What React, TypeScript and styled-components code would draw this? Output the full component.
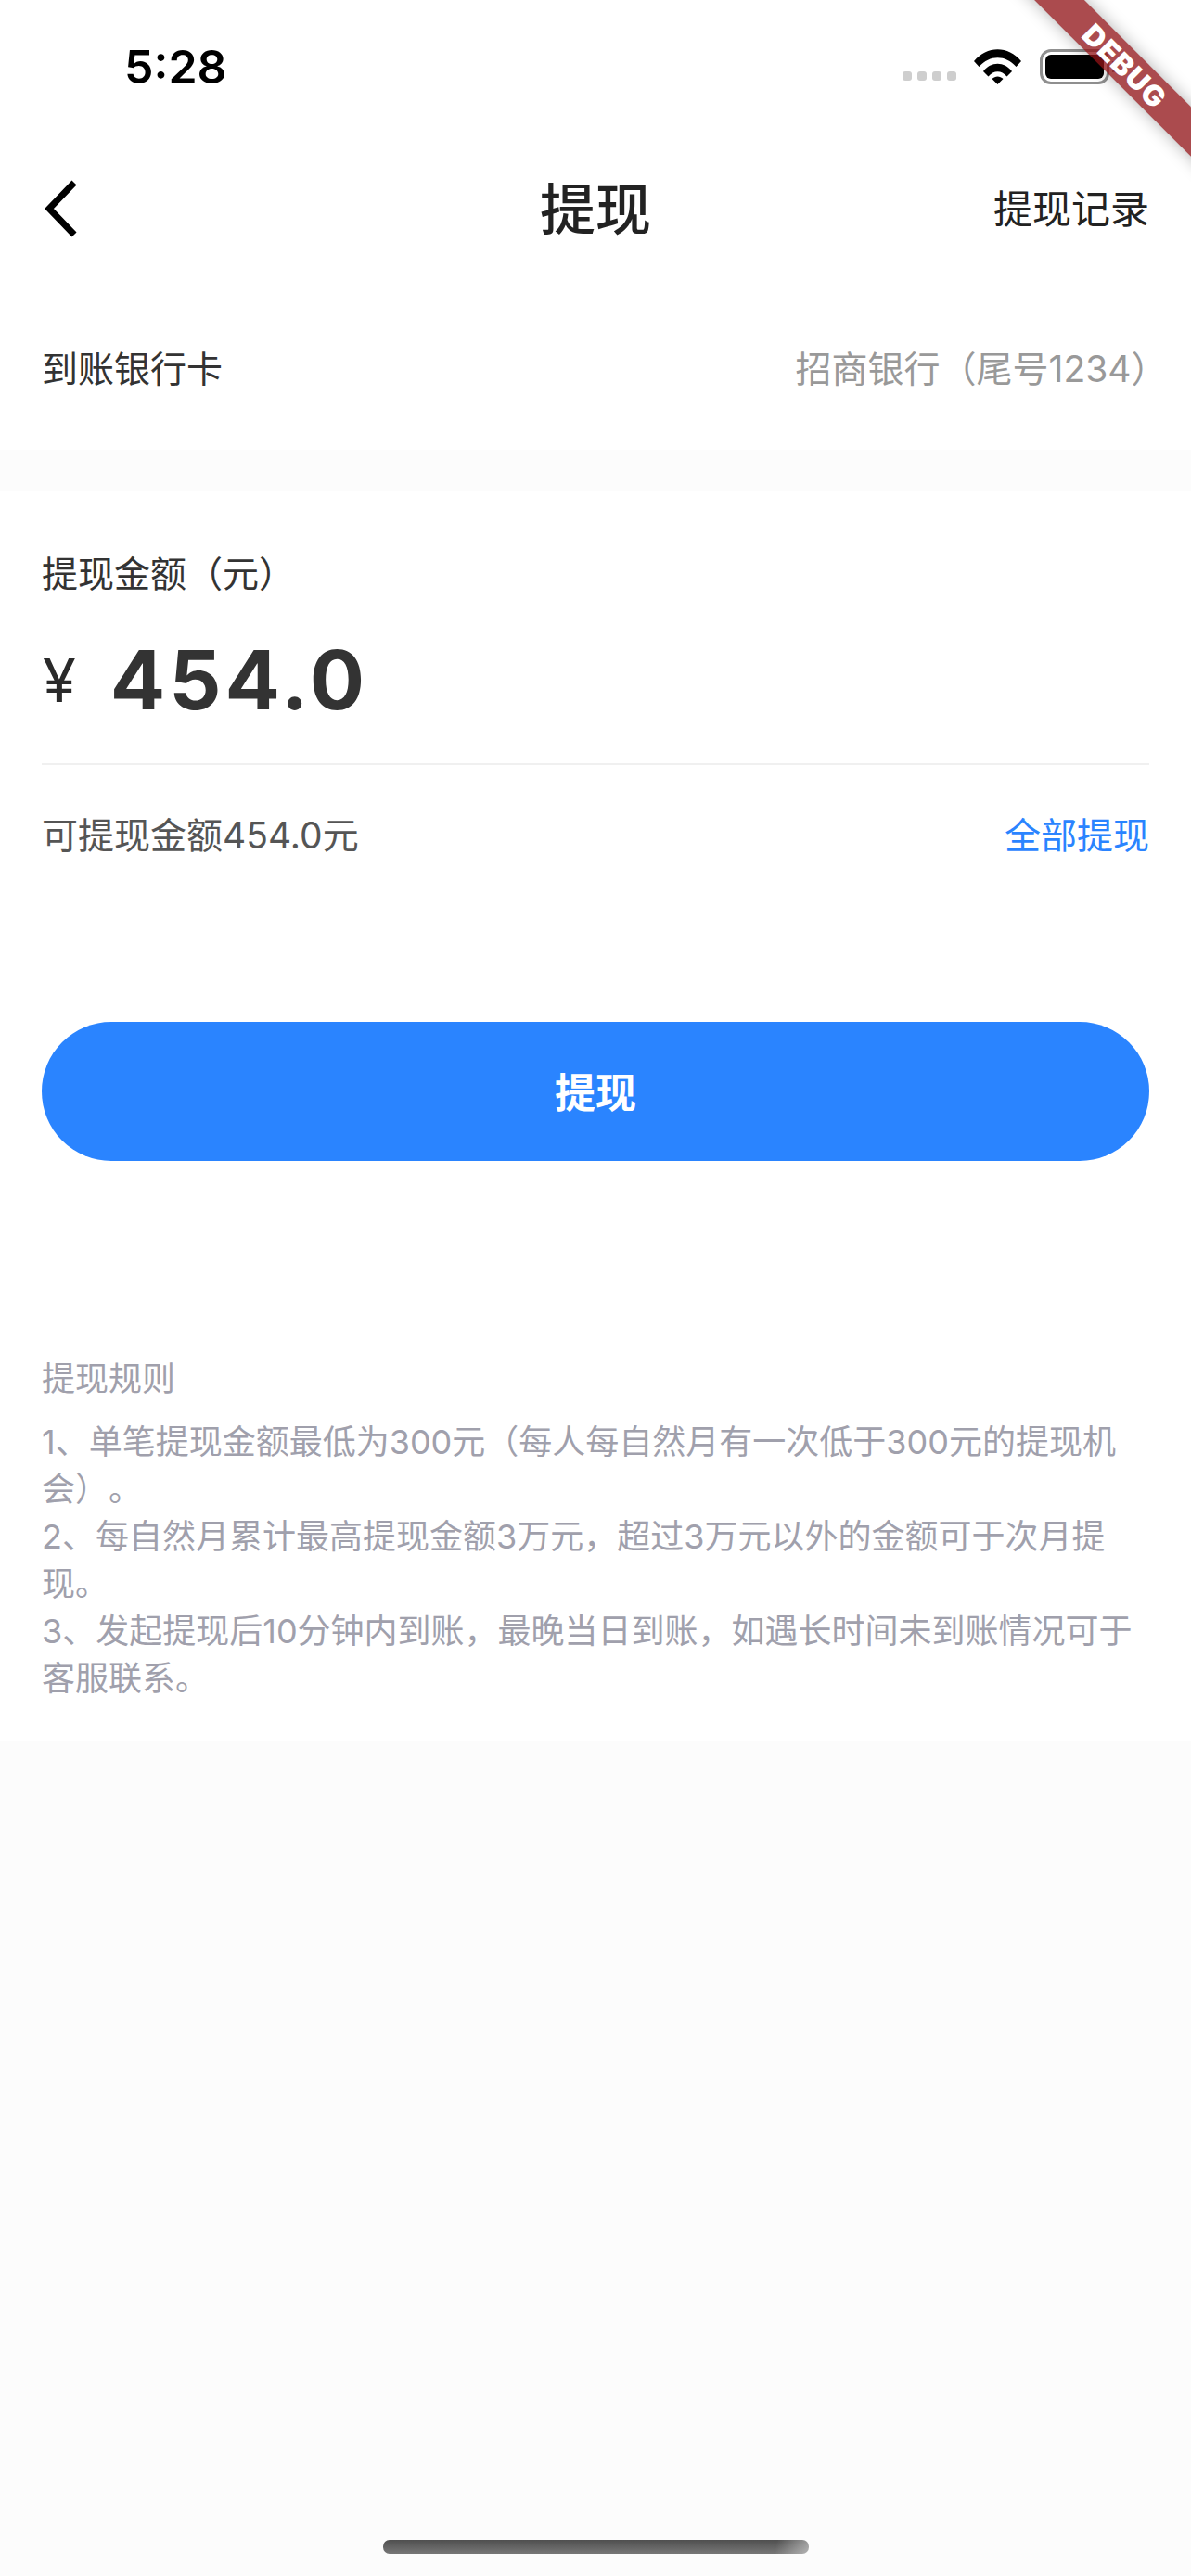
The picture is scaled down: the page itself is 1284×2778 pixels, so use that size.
import React from "react";
import styled, { createGlobalStyle } from "styled-components";

const FONT = `Inter, "Noto Sans CJK SC", sans-serif`;

const Global = createGlobalStyle`
	html, body {
		margin: 0;
		padding: 0;
		background: #fcfcfc;
	}
	* {
		box-sizing: border-box;
	}
`;

const Page = styled.div`
	position: relative;
	width: 1284px;
	height: 2778px;
	display: flex;
	flex-direction: column;
	overflow: hidden;
	background: #fcfcfc;
	font-family: ${FONT};
	text-spacing-trim: space-all;
`;

const Panel = styled.section`
	background: #fff;
	padding: 0 45px;
`;

const StatusBar = styled.div`
	height: 144px;
	display: flex;
	align-items: center;
	justify-content: space-between;
	padding: 0 88px 0 134px;
	background: #fff;
`;

const Time = styled.span`
	font-size: 50px;
	font-weight: 600;
	color: #000;
`;

const StatusIcons = styled.div`
	display: flex;
	align-items: center;
`;

const Dots = styled.div`
	display: flex;
	gap: 6px;
	margin: 20px 19px 0 0;
`;

const Dot = styled.i`
	width: 10px;
	height: 10px;
	border-radius: 3px;
	background: #cecece;
`;

const Battery = styled.div`
	position: relative;
	width: 75px;
	height: 38px;
	margin-left: 20px;
	padding: 3px;
	border: 3px solid #8f8f8f;
	border-radius: 12px;
	&::after {
		content: "";
		position: absolute;
		right: -10px;
		top: 10px;
		width: 4px;
		height: 12px;
		border-radius: 0 3px 3px 0;
		background: #8f8f8f;
	}
`;

const BatteryFill = styled.div`
	height: 100%;
	border-radius: 6px;
	background: #000;
`;

const NavBar = styled.header`
	position: relative;
	height: 162px;
	display: flex;
	align-items: center;
	justify-content: space-between;
	padding: 0 45px 0 48px;
	background: #fff;
`;

const NavTitle = styled.h1`
	position: absolute;
	left: 0;
	right: 0;
	margin: 0 0 7px;
	text-align: center;
	font-size: 60px;
	font-weight: 500;
	color: #222;
`;

const NavAction = styled.span`
	margin-bottom: 5px;
	font-size: 42px;
	color: #222;
`;

const BankRow = styled(Panel)`
	height: 179px;
	padding-bottom: 2px;
	display: flex;
	align-items: center;
	justify-content: space-between;
`;

const Text = styled.span<{ $color?: string }>`
	font-size: 39px;
	color: ${(p) => p.$color || "#333"};
`;

// closing bracket sits half width at the end of the row
const ClosingBracket = styled.span`
	display: inline-block;
	width: 0.5em;
	overflow: visible;
	white-space: nowrap;
`;

const AmountPanel = styled(Panel)`
	margin-top: 44px;
	padding-top: 59px;
`;

const AmountRow = styled.div`
	display: flex;
	align-items: center;
	gap: 37px;
	height: 120px;
	margin-top: 29px;
`;

const Currency = styled.span`
	margin-left: 1px;
	font-size: 65px;
	color: #2a2a2a;
`;

const Amount = styled.span`
	font-size: 88px;
	font-weight: 700;
	letter-spacing: 4px;
	color: #333;
`;

const Divider = styled.div`
	height: 2px;
	margin-top: 30px;
	background: #f0f0f0;
`;

const AvailableRow = styled.div`
	display: flex;
	align-items: center;
	justify-content: space-between;
	height: 150px;
	padding-bottom: 4px;
`;

const SubmitButton = styled.button`
	display: block;
	width: 100%;
	height: 150px;
	margin-top: 127px;
	padding: 0 0 2px;
	border: 0;
	border-radius: 75px;
	background: #2a84ff;
	color: #fff;
	font-family: ${FONT};
	font-size: 44px;
	font-weight: 700;
`;

const Rules = styled.div`
	margin-top: 210px;
	padding-bottom: 42px;
`;

const RulesTitle = styled.div`
	font-size: 36px;
	line-height: 50px;
	color: #a0a0ac;
`;

const RulesBody = styled.p`
	margin: 18px 0 0;
	font-size: 36px;
	line-height: 51px;
	color: #a0a0ac;
`;

const HomeWrap = styled.div`
	margin-top: auto;
	padding-bottom: 24px;
	display: flex;
	justify-content: center;
`;

const HomeBar = styled.div`
	width: 459px;
	height: 15px;
	border-radius: 7px;
	background:
		linear-gradient(100deg, transparent 92%, rgba(255, 255, 255, 0.45)),
		linear-gradient(180deg, #4f4f4f, #777);
`;

const Ribbon = styled.div`
	position: absolute;
	left: 1013px;
	top: 52px;
	width: 400px;
	height: 38px;
	display: flex;
	align-items: center;
	justify-content: center;
	transform: rotate(45deg);
	background: rgba(145, 18, 22, 0.76);
	box-shadow: 0 0 18px rgba(0, 0, 0, 0.3);
	color: #fff;
	font-size: 31px;
	font-weight: 900;
	letter-spacing: 1px;
`;

const BackIcon = () => (
	<svg width="36" height="62" viewBox="0 0 36 62">
		<path d="M32 3 L5 31 L32 59" fill="none" stroke="#000" strokeWidth="7" />
	</svg>
);

const WifiIcon = () => (
	<svg width="51" height="38" viewBox="0 0 51 38">
		<path
			d="M0 13 C14 -4 37 -4 51 13 L45.5 19 C34 6 17 6 5.5 19 Z"
			fill="#000"
		/>
		<path
			d="M10 24 C18 13 33 13 41 24 L35.5 29.5 C29.5 22.5 21.5 22.5 15.5 29.5 Z"
			fill="#000"
		/>
		<path d="M19.5 32 C23 28.5 28 28.5 31.5 32 L25.5 38 Z" fill="#000" />
	</svg>
);

export default function App() {
	return (
		<Page>
			<Global />
			<StatusBar>
				<Time>5:28</Time>
				<StatusIcons>
					<Dots>
						{[0, 1, 2, 3].map((i) => (
							<Dot key={i} />
						))}
					</Dots>
					<WifiIcon />
					<Battery>
						<BatteryFill />
					</Battery>
				</StatusIcons>
			</StatusBar>
			<NavBar>
				<BackIcon />
				<NavTitle>提现</NavTitle>
				<NavAction>提现记录</NavAction>
			</NavBar>
			<BankRow>
				<Text>到账银行卡</Text>
				<Text $color="#999">
					招商银行（尾号1234<ClosingBracket>）</ClosingBracket>
				</Text>
			</BankRow>
			<AmountPanel>
				<Text>提现金额（元）</Text>
				<AmountRow>
					<Currency>¥</Currency>
					<Amount>454.0</Amount>
				</AmountRow>
				<Divider />
				<AvailableRow>
					<Text $color="#555">可提现金额454.0元</Text>
					<Text $color="#2a84ff">全部提现</Text>
				</AvailableRow>
				<SubmitButton>提现</SubmitButton>
				<Rules>
					<RulesTitle>提现规则</RulesTitle>
					<RulesBody>
						1、单笔提现金额最低为300元（每人每自然月有一次低于300元的提现机会）。
						<br />
						2、每自然月累计最高提现金额3万元，超过3万元以外的金额可于次月提现。
						<br />
						3、发起提现后10分钟内到账，最晚当日到账，如遇长时间未到账情况可于客服联系。
					</RulesBody>
				</Rules>
			</AmountPanel>
			<HomeWrap>
				<HomeBar />
			</HomeWrap>
			<Ribbon>DEBUG</Ribbon>
		</Page>
	);
}
